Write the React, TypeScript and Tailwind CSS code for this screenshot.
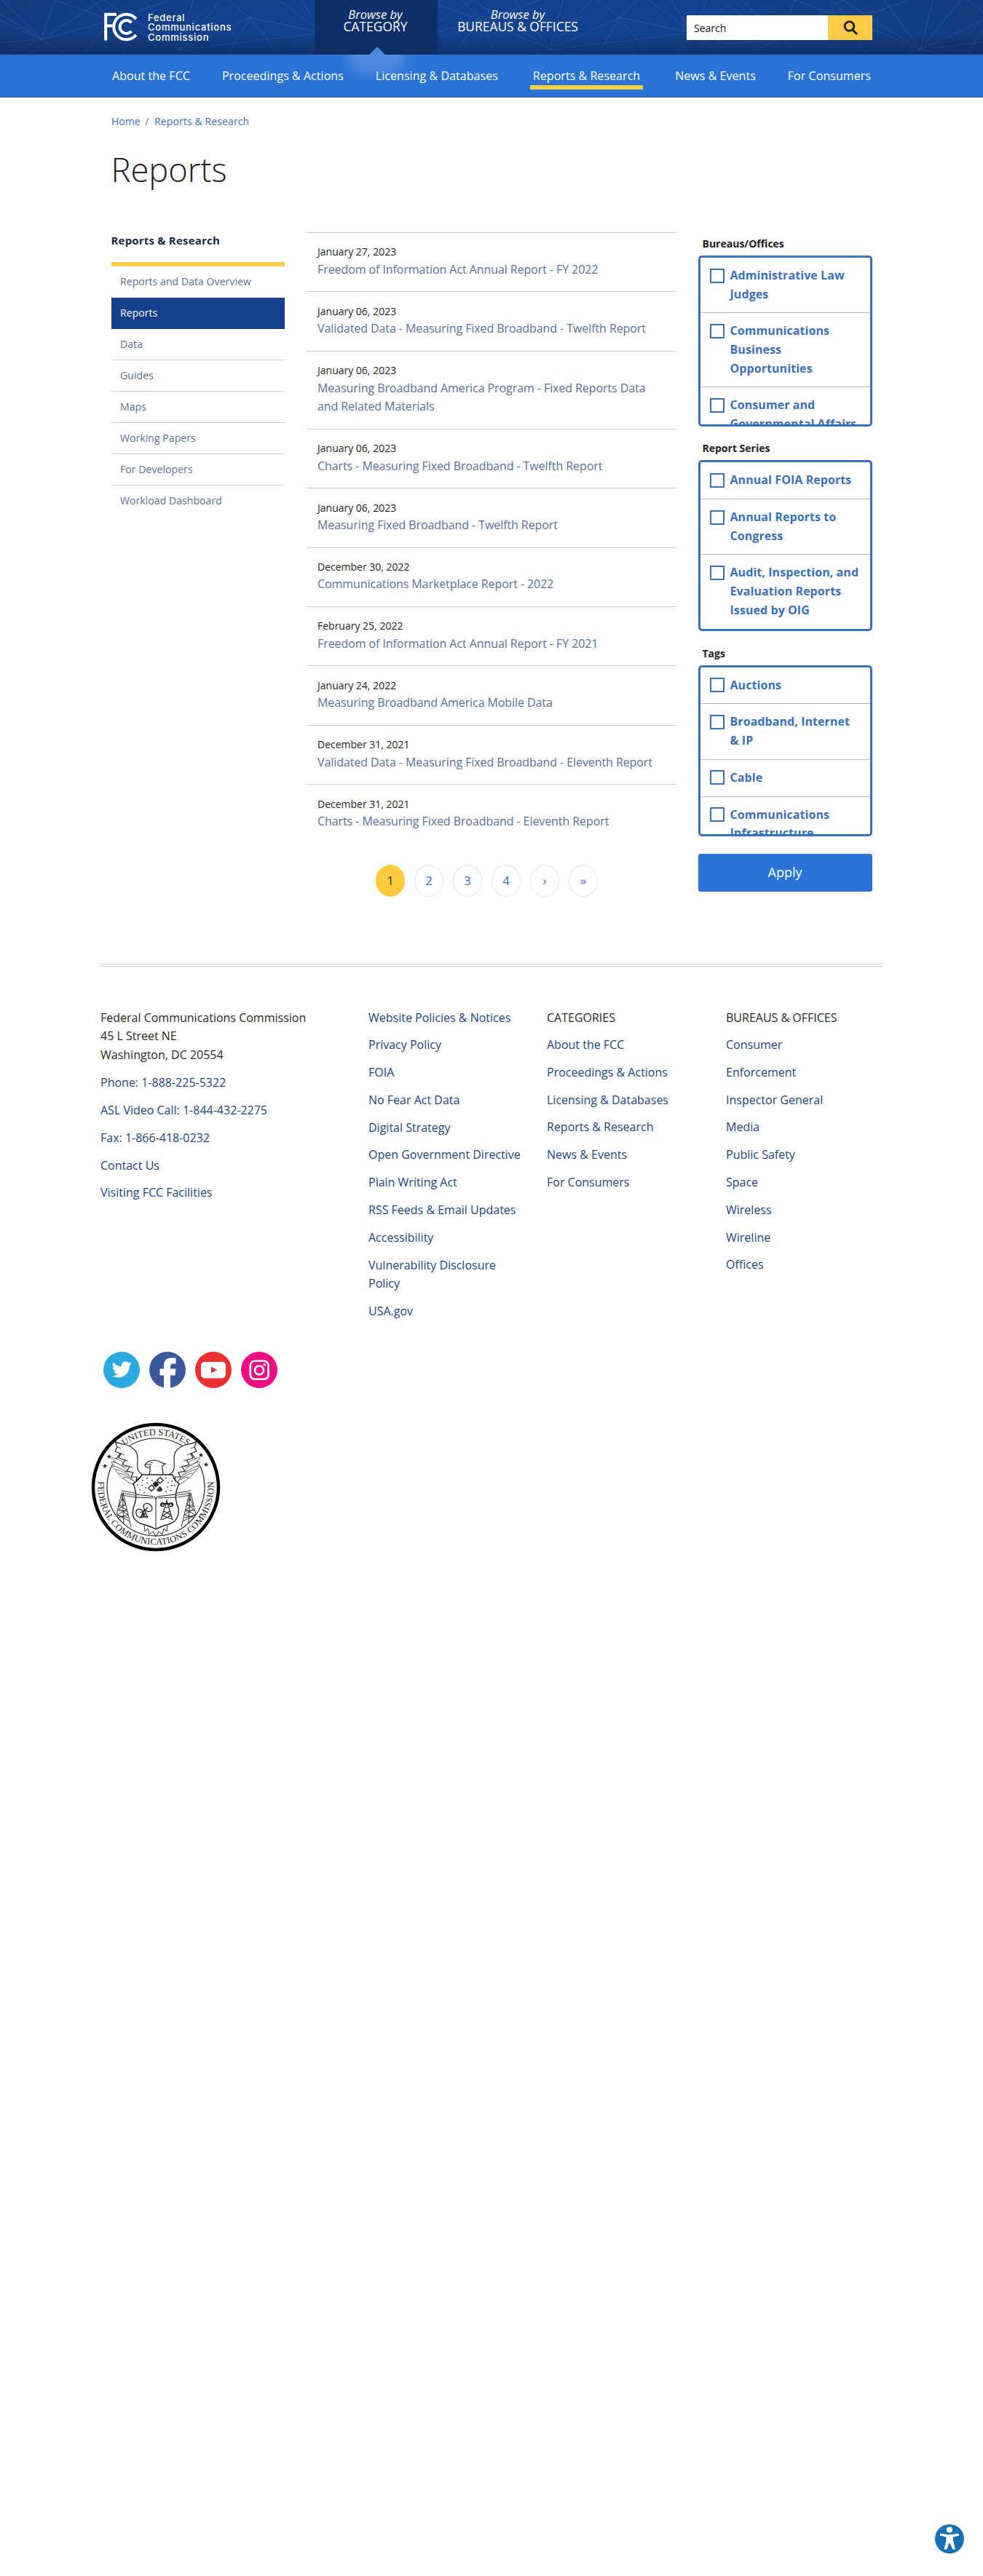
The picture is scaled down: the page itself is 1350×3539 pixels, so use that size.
import React from "react";

const reports: [string, string][] = [
  ["January 27, 2023", "Freedom of Information Act Annual Report - FY 2022"],
  ["January 06, 2023", "Validated Data - Measuring Fixed Broadband - Twelfth Report"],
  ["January 06, 2023", "Measuring Broadband America Program - Fixed Reports Data and Related Materials"],
  ["January 06, 2023", "Charts - Measuring Fixed Broadband - Twelfth Report"],
  ["January 06, 2023", "Measuring Fixed Broadband - Twelfth Report"],
  ["December 30, 2022", "Communications Marketplace Report - 2022"],
  ["February 25, 2022", "Freedom of Information Act Annual Report - FY 2021"],
  ["January 24, 2022", "Measuring Broadband America Mobile Data"],
  ["December 31, 2021", "Validated Data - Measuring Fixed Broadband - Eleventh Report"],
  ["December 31, 2021", "Charts - Measuring Fixed Broadband - Eleventh Report"],
];

const sideLinks = ["Reports and Data Overview", "Reports", "Data", "Guides", "Maps", "Working Papers", "For Developers", "Workload Dashboard"];

const filters: [string, string[]][] = [
  ["Bureaus/Offices", ["Administrative Law\nJudges", "Communications\nBusiness\nOpportunities", "Consumer and\nGovernmental Affairs"]],
  ["Report Series", ["Annual FOIA Reports", "Annual Reports to\nCongress", "Audit, Inspection, and\nEvaluation Reports\nIssued by OIG"]],
  ["Tags", ["Auctions", "Broadband, Internet\n& IP", "Cable", "Communications\nInfrastructure"]],
];

const policies = ["Website Policies & Notices", "Privacy Policy", "FOIA", "No Fear Act Data", "Digital Strategy", "Open Government Directive", "Plain Writing Act", "RSS Feeds & Email Updates", "Accessibility", "Vulnerability Disclosure Policy", "USA.gov"];
const categories = ["About the FCC", "Proceedings & Actions", "Licensing & Databases", "Reports & Research", "News & Events", "For Consumers"];
const bureaus = ["Consumer", "Enforcement", "Inspector General", "Media", "Public Safety", "Space", "Wireless", "Wireline", "Offices"];
const contact = ["Phone: 1-888-225-5322", "ASL Video Call: 1-844-432-2275", "Fax: 1-866-418-0232", "Contact Us", "Visiting FCC Facilities"];

/* Faint network of lines repeated across the masthead */
function HeaderTexture() {
  return (
    <svg className="absolute inset-0 h-full w-full" aria-hidden="true">
      <defs>
        <pattern id="web" width="508" height="75" patternUnits="userSpaceOnUse" x="-17" y="0">
          <g stroke="#6f9be0" strokeOpacity="0.18" strokeWidth="1" fill="none">
            <path d="M20 0L74 54L158 0M74 54L60 75M74 54L0 20M74 54L92 0M74 54L108 75M0 8L74 54L170 28L250 0" />
            <path d="M170 28L130 75M170 28L190 75M170 28L143 0M170 28L265 68L320 0M265 68L215 0M265 68L282 0M265 68L240 75M265 68L300 75" />
            <path d="M265 68L360 24L400 75M360 24L330 0M360 24L385 0M360 24L330 75M360 24L460 45L508 8M460 45L430 0M460 45L480 0M460 45L440 75M460 45L500 75M265 68L460 45" />
            <path d="M158 0L265 68M92 0L170 28M400 0L460 45L508 60M0 60L74 54M20 75L74 54" />
          </g>
        </pattern>
      </defs>
      <rect width="100%" height="100%" fill="url(#web)" />
    </svg>
  );
}

function Logo() {
  return (
    <div className="flex h-[39px] w-[180px] items-center">
      <svg className="shrink-0 overflow-visible" width="47" height="39" viewBox="0 0 47 39" fill="none" stroke="#fff">
        <path d="M2.200 37.500V1.800H17M2.200 17.500H11.500" strokeWidth="4" />
        <path d="M43.900 8A17.300 17.300 0 1 0 43.900 30" strokeWidth="4" />
        <path d="M37.500 13.200A9 9 0 1 0 37.500 24.800" strokeWidth="4" />
      </svg>
      <div className="mt-px ml-[13px] font-[Inter] text-[13px] font-medium leading-[13.300px] tracking-[0.750px] text-white">
        Federal<br />Communications<br />Commission
      </div>
    </div>
  );
}

function Header() {
  return (
    <header>
      <div className="relative h-[75px] bg-[#143f8c]">
        <div className="absolute inset-0 bg-[radial-gradient(ellipse_60%_110%_at_50%_40%,#14428f_40%,#12397b_100%)]" />
        <HeaderTexture />
        <div className="absolute inset-0 bg-linear-to-b from-transparent from-60% to-[#0c2858]/60" />
        <div className="relative mx-auto flex h-[75px] w-[1064px] items-start">
          <div className="w-[289px] pt-[18px]"><Logo /></div>
          <div className="relative flex h-[75px] w-[169px] flex-col items-center bg-[#0c2b5f]/80 pt-[11px] pr-[2px] text-center text-[17.400px] leading-[17px] text-white">
            <em className="text-[16.500px]">Browse by</em>
            <span>CATEGORY</span>
            <span className="absolute top-[64px] left-[75px] h-0 w-0 border-x-[11px] border-b-[11px] border-x-transparent border-b-[#4a87dc]" />
          </div>
          <div className="ml-[26px] flex w-[168px] flex-col items-center pt-[11px] text-center text-[17.400px] leading-[17px] text-white">
            <em className="text-[16.500px]">Browse by</em>
            <span className="whitespace-nowrap">BUREAUS &amp; OFFICES</span>
          </div>
          <div className="mt-[21px] mr-[9px] ml-auto flex h-[34px] w-[255px]">
            <div className="flex w-[194px] items-center bg-white pt-px pl-[10px] text-[14px] text-[#111]">Search</div>
            <div className="flex flex-1 items-center justify-center bg-[#ffcb47]">
              <svg width="20" height="20" viewBox="0 0 20 20" fill="none" stroke="#222" strokeWidth="3">
                <circle cx="8.500" cy="8" r="6.300" /><path d="M12.500 12.500L19 19" />
              </svg>
            </div>
          </div>
        </div>
      </div>
      <nav className="relative h-[59px] overflow-hidden border-b-2 border-[#3569b4] bg-[#2a73d5]">
        <div className="absolute -top-[20px] left-[478px] h-[46px] w-[80px] rounded-full bg-[#679be8]/60 blur-[8px]" />
        <div className="relative mx-auto flex h-[57px] w-[1042px] items-center justify-between text-[16px] tracking-[0.050px] text-white">
          {categories.map((c) => (
            <a key={c} className={c === "Reports & Research" ? "mt-[7px] border-b-[6px] border-[#f7d03e] px-1 pb-px" : ""}>{c}</a>
          ))}
        </div>
      </nav>
    </header>
  );
}

function Filters() {
  return (
    <aside className="w-[239px] pt-[4px]">
      {filters.map(([title, items]) => (
        <section key={title} className="mb-[18.300px]">
          <h3 className="h-[25px] pl-[6px] text-[14px] leading-[24px] font-bold text-[#1d1d1d]">{title}</h3>
          <div className="mt-[3px] h-[235px] overflow-hidden rounded-[5px] border-[3px] border-[#3b70ba]">
            {items.map((t) => (
              <label key={t} className="flex border-b border-[#bbb] pt-[12px] pb-[12.200px] pl-[13px] last:border-b-0">
                <span className="mt-[2.500px] mr-2 h-5 w-5 shrink-0 border-2 border-[#3b70ba]" />
                <span className="text-[16px] leading-[25.600px] font-bold tracking-[0.070px] whitespace-pre text-[#3b70ba]">{t}</span>
              </label>
            ))}
          </div>
        </section>
      ))}
      <button className="mt-[6px] h-[52px] w-full rounded-[3px] bg-[#2a73d5] text-[18px] text-white">Apply</button>
    </aside>
  );
}

function LinkColumn({ links, title, width }: { links: string[]; title?: string; width: string }) {
  return (
    <div className={width}>
      {title && <h4 className="mb-3 text-[#2a2a2a]">{title}</h4>}
      <ul className="space-y-[12.200px] text-[#21457f]">
        {links.map((l) => <li key={l}>{l}</li>)}
      </ul>
    </div>
  );
}

function Social() {
  return (
    <div className="mt-[42px] ml-[4px] flex gap-[13px]">
      <svg width="50" height="50" viewBox="0 0 50 50">
        <circle cx="25" cy="25" r="25" fill="#2aa9e0" />
        <path transform="translate(11.500 11) scale(1.130)" fill="#fff" d="M23.954 4.569c-.885.389-1.830.654-2.825.775 1.014-.611 1.794-1.574 2.163-2.723-.951.555-2.005.959-3.127 1.184-.896-.959-2.173-1.559-3.591-1.559-2.717 0-4.920 2.203-4.920 4.917 0 .390.045.765.127 1.124C7.691 8.094 4.066 6.130 1.640 3.161c-.427.722-.666 1.561-.666 2.475 0 1.710.870 3.213 2.188 4.096-.807-.026-1.566-.248-2.228-.616v.061c0 2.385 1.693 4.374 3.946 4.827-.413.111-.849.171-1.296.171-.314 0-.615-.030-.916-.086.631 1.953 2.445 3.377 4.604 3.417-1.680 1.319-3.809 2.105-6.102 2.105-.390 0-.779-.023-1.170-.067 2.189 1.394 4.768 2.209 7.557 2.209 9.054 0 13.999-7.496 13.999-13.986 0-.209 0-.420-.015-.630.961-.689 1.800-1.560 2.460-2.548l-.047-.020z" />
      </svg>
      <svg width="50" height="50" viewBox="0 0 50 50">
        <circle cx="25" cy="25" r="25" fill="#3b589c" />
        <path fill="#fff" d="M20 50V32.500H14.500V23.500H20V19.500Q20 8.500 30 8.500H36.500V16.500H33Q29 16.500 29 20V23.500H36.500L35.500 32.500H29V50Z" />
      </svg>
      <svg width="50" height="50" viewBox="0 0 50 50">
        <circle cx="25" cy="25" r="25" fill="#ee2f31" />
        <rect x="8" y="14" width="34" height="22.500" rx="5" fill="#fff" />
        <path d="M22 20.500L30 25L22 29.500Z" fill="#d4373f" />
      </svg>
      <svg width="50" height="50" viewBox="0 0 50 50">
        <circle cx="25" cy="25" r="25" fill="#ee0d83" />
        <g fill="none" stroke="#fff" strokeWidth="2.600">
          <rect x="12.800" y="12.800" width="24.800" height="25" rx="6" />
          <circle cx="25" cy="25.500" r="6" />
        </g>
        <circle cx="32.300" cy="17.800" r="1.800" fill="#fff" />
      </svg>
    </div>
  );
}

const wing = (
  <g>
    {[[-50, -34, 12], [-50, -28, 12.500], [-48, -22, 13], [-44, -17, 13], [-40, -12, 13], [-35, -8, 11]].map(([x, y, r]) => (
      <ellipse key={x + y} cx={x} cy={y} rx={r} ry="2.600" transform={`rotate(30 ${x} ${y})`} strokeWidth="0.600" fill="#fff" />
    ))}
    <path d="M-56 -63C-50 -58 -44 -60 -38 -57C-29 -53 -25 -48 -25 -39C-25 -30 -28 -22 -18 -17L-27 -9L-26 -14L-34 -14L-31 -20L-40 -22L-36 -28L-46 -31L-42 -37L-51 -40L-48 -46L-56 -49L-53 -55Z" fill="#fff" strokeWidth="1.200" />
    <path d="M-53 -55L-48 -53M-48 -46L-43 -44M-42 -37L-38 -36M-36 -28L-32 -27" strokeWidth="0.800" />
  </g>
);

const tower = (
  <g strokeWidth="0.900">
    <path d="M-47 8L-54 38M-45 8L-34 55M-46 8L-44 50M-48 17H-43M-50 25L-41 25M-52 32L-39 33M-53 39L-38 42M-47 12L-42 24L-51 30L-38 38L-52 42M-45 14L-51 26L-40 31L-53 38L-36 47" />
  </g>
);

/* Commission seal, drawn around the origin */
function Seal() {
  return (
    <svg className="mt-[47px] -ml-[13px]" width="178" height="178" viewBox="-89 -89 178 178" fill="none" stroke="#222">
      <defs>
        <path id="seal-top" d="M-71.500 0A71.500 71.500 0 0 1 71.500 0" />
        <path id="seal-bottom" d="M-77 -20A79.500 79.500 0 1 0 77 -20" />
      </defs>
      <circle r="86" fill="#fff" stroke="#000" strokeWidth="4.500" />
      <circle r="67" strokeWidth="1.200" />
      {wing}
      <g transform="scale(-1 1)">{wing}</g>
      <g fill="#222" stroke="none" fontFamily="Liberation Serif, serif" fontSize="12.500">
        <text textAnchor="middle"><textPath href="#seal-top" startOffset="50%">UNITED STATES</textPath></text>
        <text textAnchor="middle" letterSpacing="0.250"><textPath href="#seal-bottom" startOffset="50%">FEDERAL COMMUNICATIONS COMMISSION</textPath></text>
        {[[-64, -42], [-70, -29], [62, -44], [69, -31]].map(([x, y]) => (
          <path key={x} transform={`translate(${x} ${y}) scale(3.500)`} d="M0 -1L.25 -.3H1L.4 .15L.6 .85L0 .4L-.6 .85L-.4 .15L-1 -.3H-.25Z" />
        ))}
      </g>
      {tower}
      <g transform="translate(1 0) scale(-1 1)">{tower}</g>
      <path d="M-47 5L0 13L48 5M-47 8L0 16L48 8M-47 11L-28 14M48 11L30 14" strokeWidth="0.900" />
      <path d="M-9 -17C-7 -22 -8 -25 -8 -28C-11 -26 -14 -27 -15 -30C-13 -35 -7 -37 -1 -37C5 -36 7 -33 13 -32L9 -29C8 -26 10 -22 10 -17M-14 -31C-11 -32 -9 -30 -6 -31M-7 -33.500H-4" strokeWidth="1.200" />
      <path d="M-16 53L-15 61L-11 57L-9 65L-4 61L0 68L4 61L9 65L11 57L15 61L16 53" />
      <path d="M-19 -17H23Q25 -8 32 -5C27 6 25 15 31 29Q33 46 18 51Q7 54 0 58Q-7 54 -18 51Q-35 46 -31 29C-25 15 -27 6 -31 -5Q-24 -8 -19 -17Z" fill="#fff" strokeWidth="1.400" />
      <path d="M0 14V58M-28 10L-2 13L0 17L2 13L28 10M-29 14L-3 15M3 15L29 14" />
      <path d="M-18 -10V-8.500M-12 -13V-11.500M-12 -6V-4.500M-25 -4V-2.500M-19 -3V-1.500M-14 0V1.500M-22 3V4.500M14 -13V-11.500M17 -7V-5.500M22 -9V-7.500M16 -1V.5M22 -3V-1.500M26 -3V-1.500M14 5V6.500M21 4V5.500M-5 -10V-8.500M-16 7V8.500" strokeWidth="1.500" />
      <g transform="translate(0 -4) rotate(-42)">
        <path d="M-2.500 -3H2.500V3H-2.500Z" fill="#222" />
        <path d="M-11 -3H-5V3H-11ZM5 -3H11V3H5ZM-5 0H5" strokeWidth="1.300" />
      </g>
      <path d="M1 4Q3 8 9 5Q9 0 5 -1Z" fill="#333" stroke="none" />
      <g strokeWidth="1.300">
        <ellipse cx="-22" cy="36" rx="5" ry="6" transform="rotate(-30 -22 36)" />
        <ellipse cx="-11" cy="28" rx="5" ry="6.500" transform="rotate(-50 -11 28)" />
        <path d="M-16 31L-21 42M-16 31L-11 42M-19 37H-13M-20 41H-12M-19 37L-12 42M-22 35L-16 33L-11 28" />
      </g>
      <g strokeWidth="1.200">
        <path d="M15 19L7 45M15 19L23 45M12 28H18M11 33L20 38M19 33L9 40M9 39L22 44M21 39L8 45M15 17V24" />
        <path d="M9 22L7 26M21 22L24 26M10 23H20" strokeWidth="2" />
        <circle cx="9" cy="24" r="2.500" /><circle cx="21" cy="24" r="2.500" />
      </g>
    </svg>
  );
}

export default function App() {
  return (
    <div className="relative min-h-[3539px] bg-white font-['Open_Sans',sans-serif] text-[#1d1d1d]">
      <Header />
      <main className="mx-auto w-[1045px]">
        <div className="pt-[22px] pl-[0.500px] text-[14px] leading-[22px] text-[#3d71bd]">
          Home <span className="mr-[4px] ml-[3px] text-[#666]">/</span> <span className="tracking-[0.120px]">Reports &amp; Research</span>
        </div>
        <h1 className="mt-[25px] text-[45.300px] leading-[60px] font-light text-[#222]">Reports</h1>
        <div className="mt-[56px] flex">
          <aside className="w-[238px]">
            <h2 className="h-[41px] text-[15px] leading-[23px] font-bold tracking-[0.200px] text-[#1b2a40]">Reports &amp; Research</h2>
            <ul className="border-t-[6px] border-[#fccd4d] text-[14px] tracking-[0.070px] text-[#5d7094]">
              {sideLinks.map((l) => (
                <li key={l} className={l === "Reports" ? "h-[43px] bg-[#15408c] pl-[12.500px] leading-[42px] text-white" : "h-[43px] border-b border-[#ccc] pl-[12.500px] leading-[42px] first:border-0 last:border-0"}>{l}</li>
              ))}
            </ul>
          </aside>
          <section className="ml-[30px] w-[508px]">
            {reports.map(([d, t], i) => (
              <article key={i} className="border-t border-[#ccc] pt-[15.400px] pr-[16px] pb-[17px] pl-[15.500px]">
                <div className="text-[14px] leading-[22.400px]">{d}</div>
                <div className="text-[16px] leading-[25.600px] tracking-[-0.080px] text-[#5a7099]">{t}</div>
              </article>
            ))}
            <div className="mt-[29px] flex justify-center gap-[13px] pr-[12px] text-[17px]">
              {["1", "2", "3", "4", "›", "»"].map((p) => (
                <span key={p} className={p === "1" ? "flex h-[44px] w-10 items-center justify-center rounded-[50%] bg-[#fecb3e] text-[#333]" : "flex h-[44px] w-10 items-center justify-center rounded-[50%] border border-[#e4e4e4] text-[#3c6fbd]"}>{p}</span>
              ))}
            </div>
          </section>
          <div className="ml-auto"><Filters /></div>
        </div>
      </main>
      <footer className="mx-auto mt-[92px] w-[1074px] border-t-[4px] border-double border-[#ccc] pt-[58px] text-[16px] leading-[25.600px]">
        <div className="flex">
          <div className="w-[368px]">
            <address className="mb-[13px] not-italic text-[#2a2a2a]">Federal Communications Commission<br />45 L Street NE<br />Washington, DC 20554</address>
            <LinkColumn links={contact} width="w-full" />
          </div>
          <LinkColumn links={policies} width="w-[245px] pr-[30px]" />
          <LinkColumn title="CATEGORIES" links={categories} width="w-[246px]" />
          <LinkColumn title="BUREAUS & OFFICES" links={bureaus} width="w-[215px]" />
        </div>
        <Social />
        <Seal />
      </footer>
      <button className="fixed right-[26px] bottom-[31px] h-10 w-10" aria-label="Accessibility options">
        <svg width="40" height="40" viewBox="0 0 40 40">
          <circle cx="20" cy="20" r="20" fill="#1a6fb3" />
          <g fill="#fff">
            <circle cx="20" cy="7.500" r="4" />
            <path d="M7 12.500L17 14H23L33 12.500V15.500L25 17.500V22L28 34.500H24.500L20 25L16 34.500H12.500L15.500 22V17.500L7 15.500Z" />
          </g>
        </svg>
      </button>
    </div>
  );
}
